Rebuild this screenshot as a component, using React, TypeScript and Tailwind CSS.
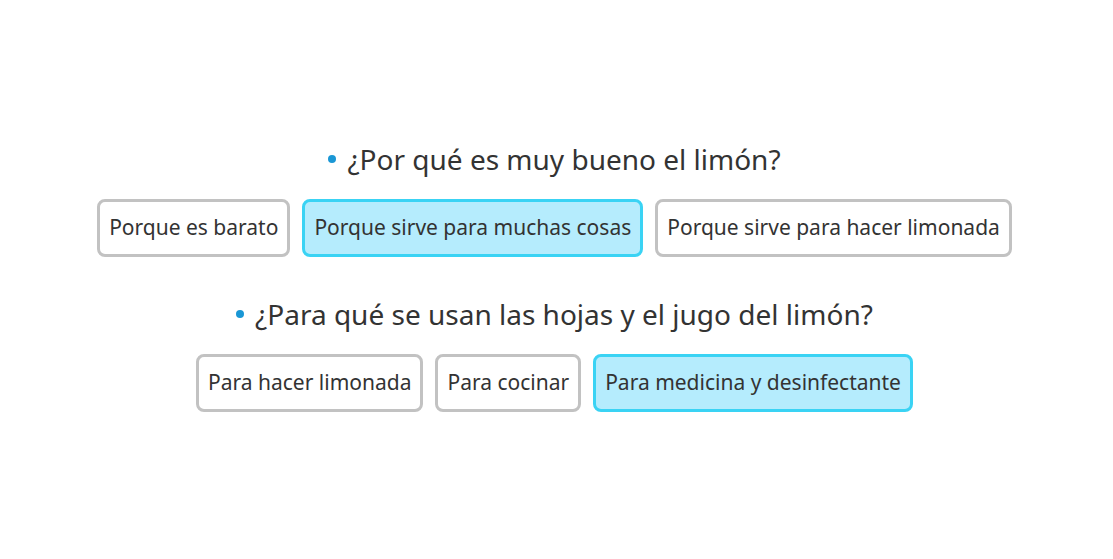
const questions = [
  {
    q: "¿Por qué es muy bueno el limón?",
    options: [
      "Porque es barato",
      "Porque sirve para muchas cosas",
      "Porque sirve para hacer limonada",
    ],
    selected: 1,
  },
  {
    q: "¿Para qué se usan las hojas y el jugo del limón?",
    options: ["Para hacer limonada", "Para cocinar", "Para medicina y desinfectante"],
    selected: 2,
  },
];

export default function App() {
  return (
    <div
      className="h-[559px] w-full bg-white flex flex-col items-center justify-center gap-[39px] pb-[7px] pr-[4px] text-[#333333]"
      style={{ fontFamily: '"Segoe UI", "Noto Sans", "Open Sans", sans-serif' }}
    >
      {questions.map((item, i) => (
        <div key={i} className="flex flex-col items-center gap-[22px]">
          <div className="flex items-center gap-[11px] text-[28px] leading-[36px]">
            <span className="w-[8px] h-[8px] rounded-full bg-[#1a97d5]" />
            <span>{item.q}</span>
          </div>
          <div className="flex gap-3">
            {item.options.map((opt, j) => (
              <div
                key={j}
                className={
                  j === item.selected
                    ? "h-[58px] px-[9px] flex items-center rounded-lg border-[3px] border-[#3ad3f4] bg-[#b5ecfd] text-[21px]"
                    : "h-[58px] px-[9px] flex items-center rounded-lg border-[3px] border-[#c2c2c2] bg-white text-[21px]"
                }
              >
                {opt}
              </div>
            ))}
          </div>
        </div>
      ))}
    </div>
  );
}
